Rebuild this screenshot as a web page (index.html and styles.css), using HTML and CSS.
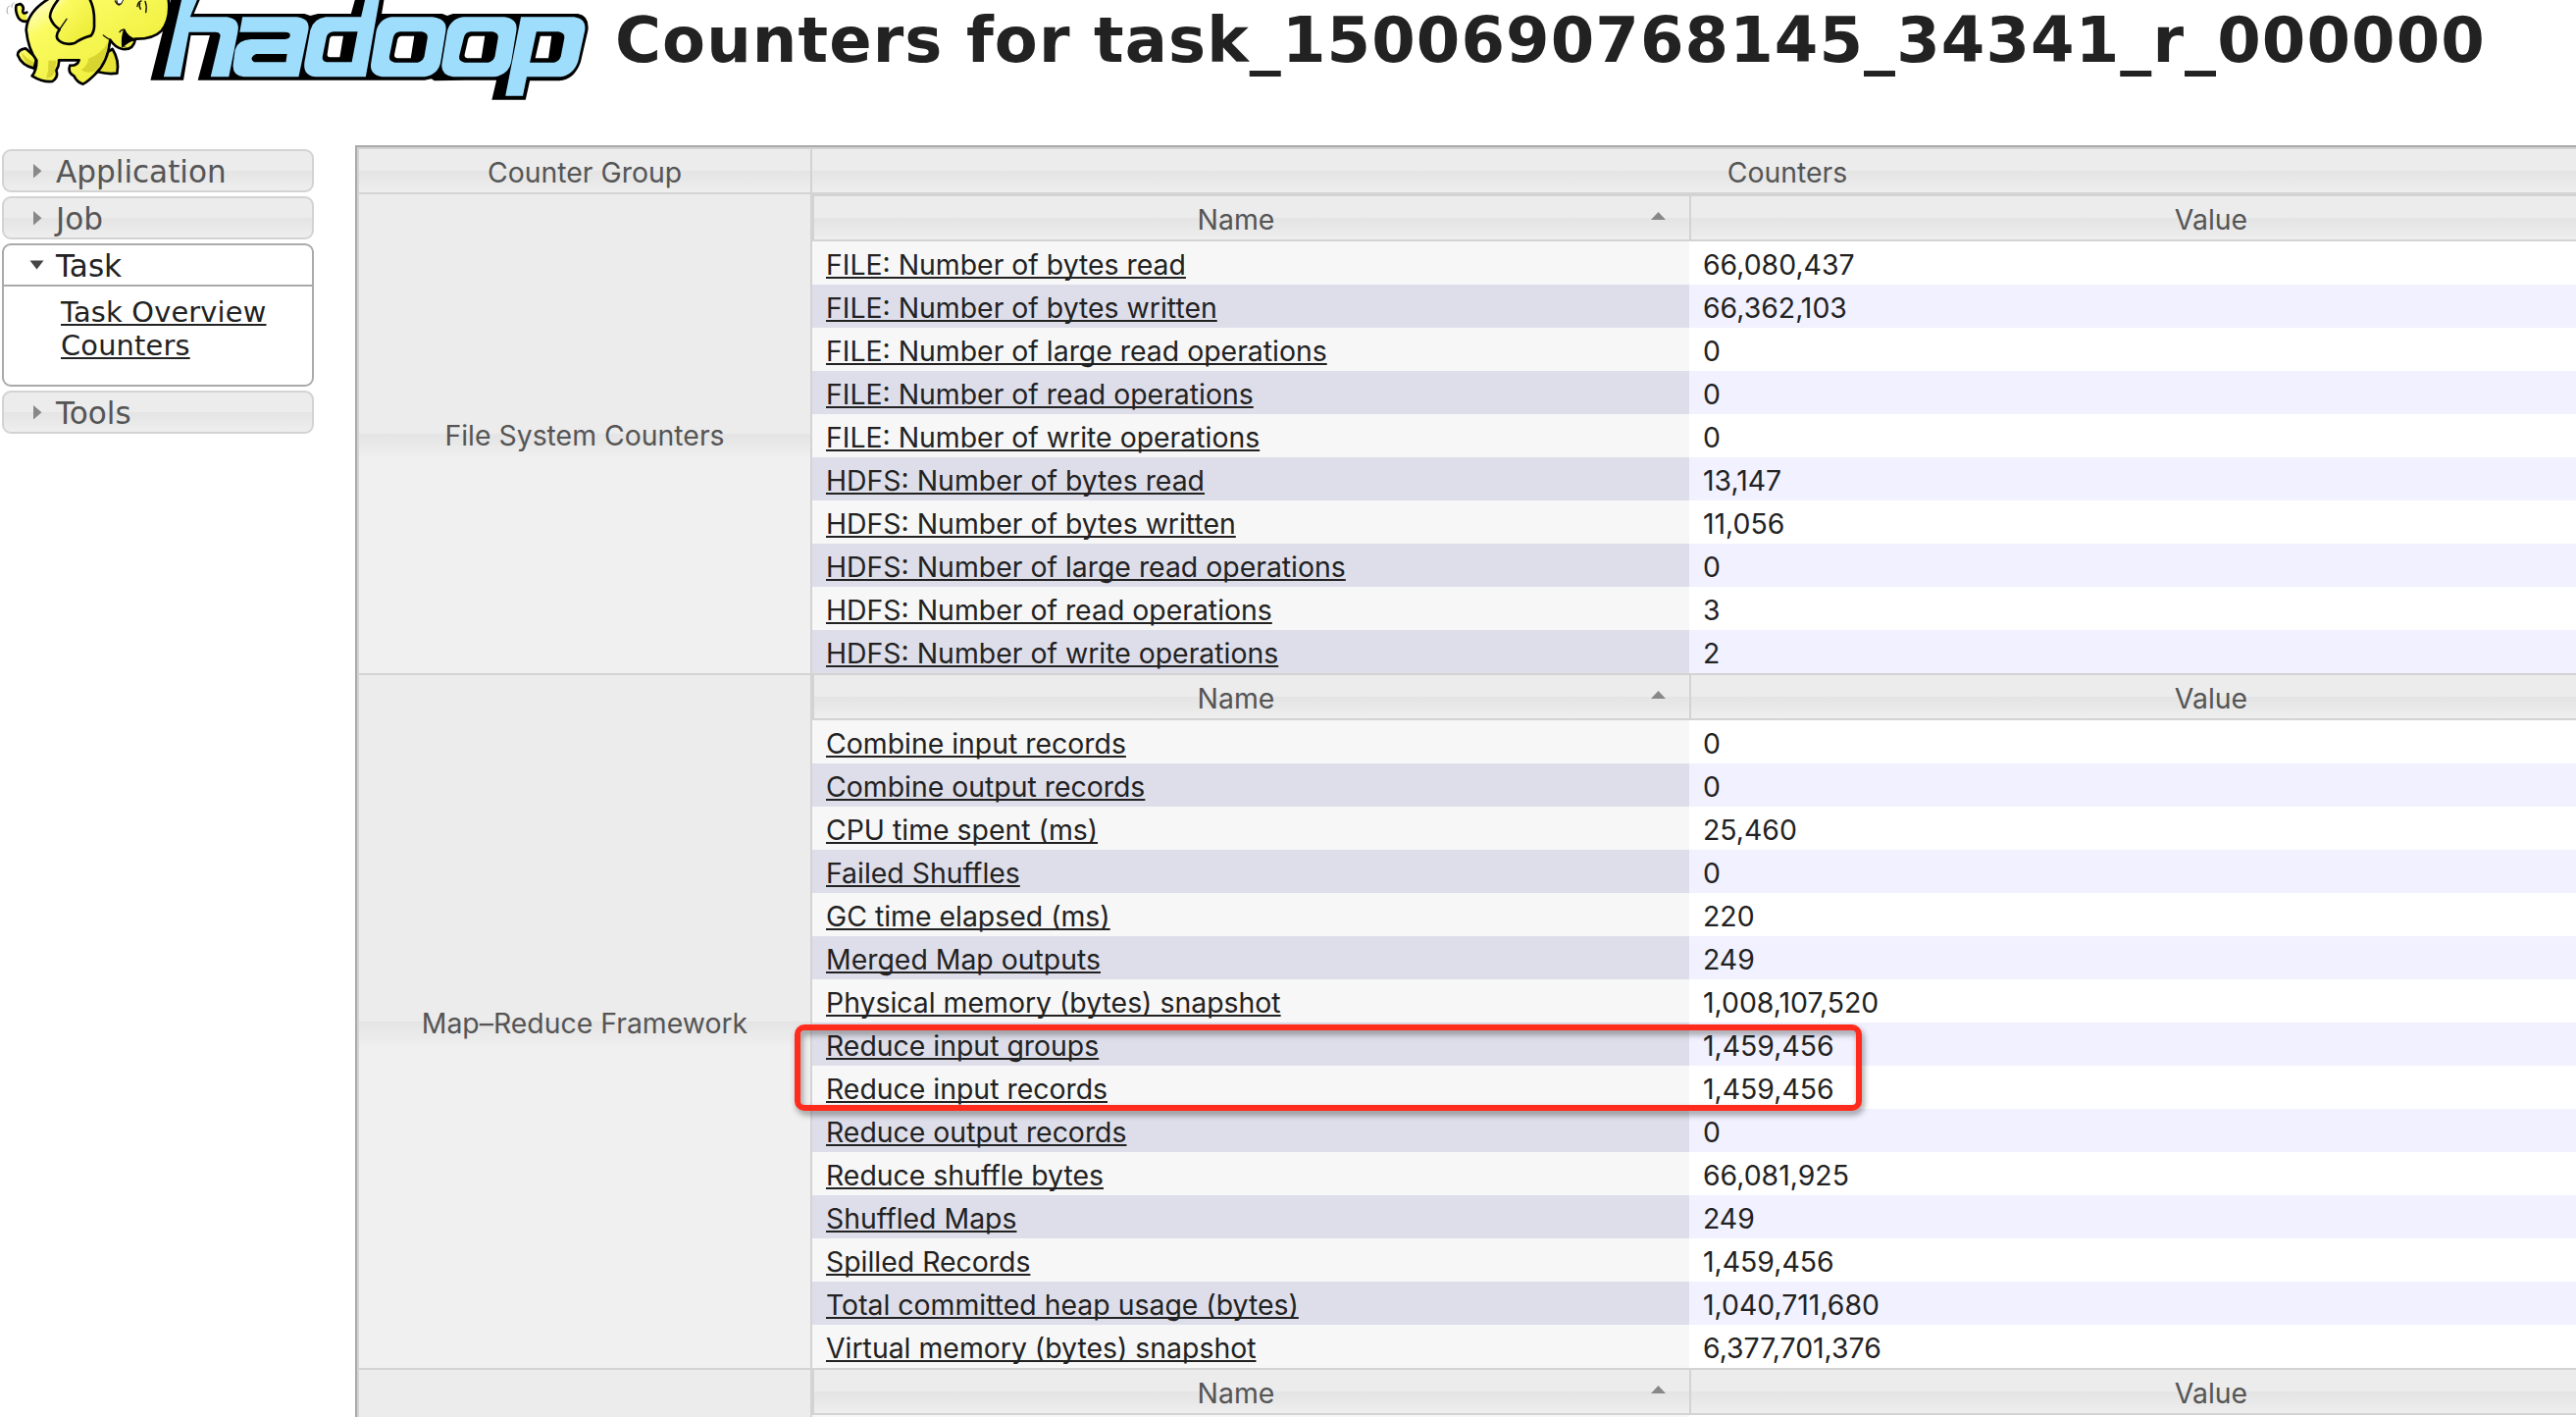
FILE: index.html
```
<!DOCTYPE html>
<html lang="en">
<head>
<meta charset="utf-8">
<title>Counters for task_1500690768145_34341_r_000000</title>
<link rel="stylesheet" href="styles.css">
</head>
<body>
<header class="top">
  <div class="logo">
    <svg class="wordmark" viewBox="0 0 1568 360" preserveAspectRatio="none" aria-label="hadoop">
      <path fill="#000" d="M440 0H515L500 42H785L800 48L820 42H905L915 0H990L984 42H1140L1153 48L1168 42H1490Q1520 48 1516 92L1497 190Q1480 245 1442 247H1366L1355 305H1268L1280 245H1200L1120 247L1112 241L1095 245H510L541 108H492L473 245H388Z"/>
      <g fill="#9fddfd">
        <path d="M468 0H508L490 52H585Q620 58 613 98L590 235H543L568 110Q568 98 555 98H487L465 235H422Z"/>
        <path d="M625 52H765Q800 57 795 92L770 235H628Q595 230 602 188L606 152Q613 122 648 120H735Q748 118 748 107Q748 98 735 98H618Z"/>
        <path d="M840 52H931L941 0H978L943 235H812Q780 230 785 190L800 92Q808 57 840 52Z"/>
        <path d="M1010 52H1115Q1155 58 1149 96L1136 190Q1130 228 1095 235H985Q950 228 957 190L970 95Q978 57 1010 52Z"/>
        <path d="M1195 52H1300Q1337 58 1331 96L1318 190Q1312 228 1275 235H1168Q1133 228 1140 190L1153 95Q1162 57 1195 52Z"/>
        <path d="M1343 52H1480Q1512 58 1508 92L1491 185Q1480 228 1445 235H1358L1348 293H1303Z"/>
      </g>
      <g fill="#000">
        <path d="M660 165H740L737 190H655Q640 178 660 165Z"/>
        <path d="M860 97H922L907 190H842Q828 186 832 170L842 112Q846 98 860 97Z"/>
        <path d="M1032 97H1088Q1104 101 1102 116L1094 172Q1090 188 1077 191H1018Q1002 188 1004 172L1014 114Q1018 98 1032 97Z"/>
        <path d="M1214 97H1270Q1286 101 1284 116L1276 172Q1272 188 1259 191H1198Q1182 188 1184 172L1196 114Q1200 98 1214 97Z"/>
        <path d="M1383 97H1440Q1457 101 1455 116L1446 172Q1442 188 1429 191H1366Z"/>
      </g>
      <g fill="#fff">
        <path d="M857 110H885L876 175H851Q842 173 844 164L850 118Q852 111 857 110Z"/>
        <path d="M1034 110H1068L1059 178H1024Q1015 176 1017 166L1025 119Q1027 111 1034 110Z"/>
        <path d="M1216 110H1250L1241 178H1205Q1196 176 1198 166L1207 119Q1209 111 1216 110Z"/>
        <path d="M1393 110H1422L1414 178H1380Z"/>
      </g>
    </svg>
    <svg class="elephant" viewBox="0 0 600 330" aria-hidden="true">
      <defs>
        <linearGradient id="hide" x1="0" y1="0" x2="1" y2="1">
          <stop offset="0" stop-color="#fffff0"/><stop offset=".25" stop-color="#fbfb62"/><stop offset="1" stop-color="#e9e92c"/>
        </linearGradient>
      </defs>
      <g stroke="#000" stroke-width="8" stroke-linejoin="round" stroke-linecap="round" fill="url(#hide)">
        <path d="M82 65Q66 68 56 54Q45 32 50 16L62 12Q75 20 70 32Q68 45 82 38"/>
        <path d="M78 148Q54 152 54 168Q66 200 104 209L112 178Z"/>
        <path d="M344 150Q366 185 358 224Q330 228 300 220L310 170Z" fill="#e6e336"/>
        <path d="M160-10C105 20 82 55 80 92C84 130 95 162 112 185Q112 215 98 232Q130 252 160 249Q180 235 172 215Q182 200 180 184H242Q236 202 214 200Q206 222 226 232Q236 252 254 257Q268 250 292 226Q330 190 337 122Q352 146 375 150Q408 154 414 119Q468 120 494 94Q525 55 514-10Z"/>
        <path d="M185-10Q152 30 153 52Q160 75 182 90Q166 112 180 124Q200 140 228 132Q250 116 278 109Q290 95 288 70Q290 20 270-10"/>
        <path d="M380 90Q372 110 374 142Q398 140 414 120Q390 114 380 90Z" fill="#000" stroke-width="4"/>
      </g>
      <path fill="#c9c423" d="M148 185H172L168 220Q160 240 142 238Q150 212 148 185ZM270 180Q310 165 330 130Q325 190 288 218Q262 226 248 214Q270 200 270 180ZM64 158Q80 178 102 190L101 203Q74 196 64 158Z" opacity=".65"/>
      <g fill="none" stroke="#111" stroke-width="4" stroke-linecap="round">
        <path d="M182 90L204 58M316 108Q326 116 337 122M366 98Q372 88 382 92M352 3Q362 24 372 8M420 20Q422 5 432 3M446 38Q450 20 444 4M430 28Q424 20 428 10" />
        <path d="M24 42Q16 28 28 18M36 22Q32 14 42 8" stroke="#777" stroke-width="2"/>
      </g>
      <path d="M356-2H378L370 12H360Z" fill="#fff" stroke="#111" stroke-width="3"/>
      <path d="M379 142Q398 126 409 125Q404 142 379 142Z" fill="#f5f057"/>
    </svg>
  </div>
  <h1 class="title">Counters for task_1500690768145_34341_r_000000</h1>
</header>
<div class="main">
  <nav class="nav">
    <h3 class="nav-head"><svg class="tri" viewBox="0 0 16 16"><path d="M4 1L12.500 8.300L4 15.500Z" fill="#888"/></svg>Application</h3>
    <h3 class="nav-head"><svg class="tri" viewBox="0 0 16 16"><path d="M4 1L12.500 8.300L4 15.500Z" fill="#888"/></svg>Job</h3>
    <div class="nav-open">
      <h3 class="nav-head active"><svg class="tri" viewBox="0 0 16 16"><path d="M.5 3.500H14.500L7.500 12.500Z" fill="#454545"/></svg>Task</h3>
      <div class="links"><a>Task Overview</a><a>Counters</a></div>
    </div>
    <h3 class="nav-head"><svg class="tri" viewBox="0 0 16 16"><path d="M4 1L12.500 8.300L4 15.500Z" fill="#888"/></svg>Tools</h3>
  </nav>
  <section class="counters">
    <div class="row head"><div class="group glass">Counter Group</div><div class="all glass">Counters</div></div>
    <div class="row">
      <div class="group glass">File System Counters</div>
      <div class="inner first">
        <div class="cols"><div class="th glass">Name<i class="sort"></i></div><div class="th glass">Value</div></div>
        <div class="item"><div><a>FILE: Number of bytes read</a></div><div>66,080,437</div></div>
        <div class="item"><div><a>FILE: Number of bytes written</a></div><div>66,362,103</div></div>
        <div class="item"><div><a>FILE: Number of large read operations</a></div><div>0</div></div>
        <div class="item"><div><a>FILE: Number of read operations</a></div><div>0</div></div>
        <div class="item"><div><a>FILE: Number of write operations</a></div><div>0</div></div>
        <div class="item"><div><a>HDFS: Number of bytes read</a></div><div>13,147</div></div>
        <div class="item"><div><a>HDFS: Number of bytes written</a></div><div>11,056</div></div>
        <div class="item"><div><a>HDFS: Number of large read operations</a></div><div>0</div></div>
        <div class="item"><div><a>HDFS: Number of read operations</a></div><div>3</div></div>
        <div class="item"><div><a>HDFS: Number of write operations</a></div><div>2</div></div>
      </div>
    </div>
    <div class="row">
      <div class="group glass">Map–Reduce Framework</div>
      <div class="inner">
        <div class="cols"><div class="th glass">Name<i class="sort"></i></div><div class="th glass">Value</div></div>
        <div class="item"><div><a>Combine input records</a></div><div>0</div></div>
        <div class="item"><div><a>Combine output records</a></div><div>0</div></div>
        <div class="item"><div><a>CPU time spent (ms)</a></div><div>25,460</div></div>
        <div class="item"><div><a>Failed Shuffles</a></div><div>0</div></div>
        <div class="item"><div><a>GC time elapsed (ms)</a></div><div>220</div></div>
        <div class="item"><div><a>Merged Map outputs</a></div><div>249</div></div>
        <div class="item"><div><a>Physical memory (bytes) snapshot</a></div><div>1,008,107,520</div></div>
        <div class="item"><div><a>Reduce input groups</a></div><div>1,459,456</div></div>
        <div class="item"><div><a>Reduce input records</a></div><div>1,459,456</div></div>
        <div class="item"><div><a>Reduce output records</a></div><div>0</div></div>
        <div class="item"><div><a>Reduce shuffle bytes</a></div><div>66,081,925</div></div>
        <div class="item"><div><a>Shuffled Maps</a></div><div>249</div></div>
        <div class="item"><div><a>Spilled Records</a></div><div>1,459,456</div></div>
        <div class="item"><div><a>Total committed heap usage (bytes)</a></div><div>1,040,711,680</div></div>
        <div class="item"><div><a>Virtual memory (bytes) snapshot</a></div><div>6,377,701,376</div></div>
        <div class="marker"></div>
      </div>
    </div>
    <div class="row">
      <div class="group plain"></div>
      <div class="inner">
        <div class="cols"><div class="th glass">Name<i class="sort"></i></div><div class="th glass">Value</div></div>
        <div class="item"><div></div><div></div></div>
      </div>
    </div>
  </section>
</div>
</body>
</html>
```
FILE: styles.css
```
* { box-sizing: border-box; }
html, body { margin: 0; height: 1444px; overflow: hidden; background: #fff; }
body { font-family: Inter, "Liberation Sans", sans-serif; font-size: 28.4px; color: #222; }

.top { display: flex; height: 148px; }
.logo { position: relative; width: 627px; height: 120px; flex: none; }
.wordmark { display: block; width: 620px; height: 120px; }
.elephant { position: absolute; left: 0; top: 0; width: 200px; height: 110px; }
.title {
  margin: 0; padding-top: 4px; white-space: nowrap;
  font: bold 64px/74px "DejaVu Sans", sans-serif; letter-spacing: 1.1px;
}

.main { display: flex; align-items: flex-start; }
.nav {
  display: flex; flex-direction: column; gap: 4px; flex: none;
  width: 318px; margin: 4px 42px 0 2px;
  font-family: "DejaVu Sans", sans-serif;
}
.nav-head {
  display: flex; align-items: center; gap: 11px; margin: 0;
  height: 44px; padding: 2px 0 0 26px;
  border: 2px solid #d3d3d3; border-radius: 9px;
  font-size: 31.1px; font-weight: 400; line-height: 38px; color: #555;
  background: linear-gradient(#ececec 50%, #e4e4e4 50%, #eee);
}
.tri { width: 16px; height: 16px; flex: none; margin-bottom: 2px; }
.nav-head.active { border: 0; border-bottom: 2px solid #aaa; border-radius: 0; height: 42px; color: #222; background: none; }
.nav-open { height: 146px; border: 2px solid #aaa; border-radius: 9px; }
.links { display: flex; flex-direction: column; padding: 9px 0 0 58px; font-size: 28.8px; line-height: 34px; letter-spacing: .2px; }

a { text-decoration: underline; text-decoration-thickness: 2px; text-underline-offset: 2px; text-decoration-skip-ink: none; }

.counters { flex: none; width: 2458px; border: 2px solid #aaa; box-shadow: inset 0 0 0 2px #d3d3d3; padding: 2px; }
.glass { background: linear-gradient(#ececec 50%, #e4e4e4 50%, #ececec calc(50% + 18px), #f0f0f0 calc(50% + 26px)); color: #555; }
.row { display: flex; border-bottom: 2px solid #d3d3d3; }
.head { height: 46px; line-height: 41px; }
.group { display: flex; align-items: center; justify-content: center; width: 462px; flex: none; padding: 3px 0 0; border-right: 2px solid #d3d3d3; }
.plain { background: #ececec; }
.all { flex: 1; padding-top: 3px; text-align: center; }
.inner { position: relative; flex: 1; }
.first { border-top: 2px solid #d3d3d3; }
.cols { display: grid; grid-template-columns: 894px 1fr; height: 46px; border-bottom: 2px solid #d3d3d3; }
.th { position: relative; border-left: 2px solid #d3d3d3; padding: 3px 32px 0 0; line-height: 41px; text-align: center; }
.sort {
  position: absolute; right: 24px; top: 16px; width: 15px; height: 8px;
  background: #888; clip-path: polygon(50% 0, 100% 100%, 0 100%);
}
.item { display: grid; grid-template-columns: 894px 1fr; height: 44px; line-height: 41px; }
.item > div { padding: 3px 0 0 14px; }
.item > div:first-child { background: #f7f7f7; }
.item:nth-child(odd) > div { background: #f1f1ff; }
.item:nth-child(odd) > div:first-child { background: #dedeea; }

.marker {
  position: absolute; left: -18px; top: 356px; width: 1088px; height: 88px;
  border: 6px solid #ff2b1c; border-radius: 10px;
  filter: drop-shadow(2px 4px 3px rgba(0, 0, 0, .4));
}
```
